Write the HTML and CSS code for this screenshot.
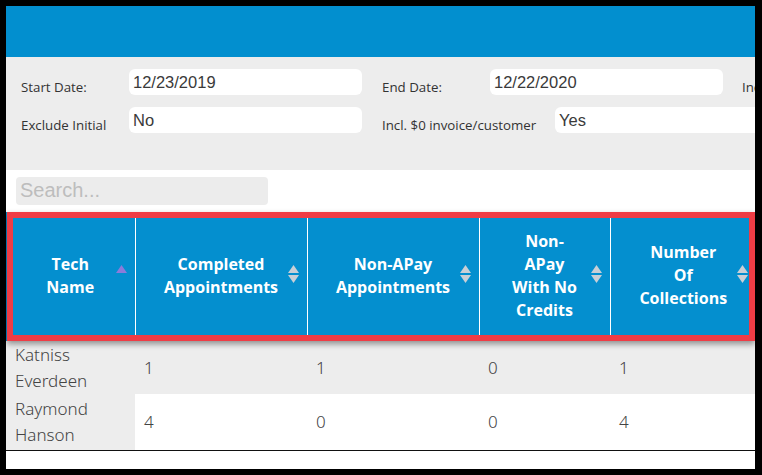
FILE: index.html
```html
<!DOCTYPE html>
<html>
<head>
<meta charset="utf-8">
<link rel="stylesheet" href="styles.css">
</head>
<body>
<div class="frame">
  <div class="topbar"></div>
  <div class="filters">
    <div class="frow">
      <span class="flabel w108">Start Date:</span>
      <div class="finput w233">12/23/2019</div>
      <span class="flabel w108 ml20">End Date:</span>
      <div class="finput w233">12/22/2020</div>
      <span class="flabel ml19">Incl. Credit</span>
    </div>
    <div class="frow">
      <span class="flabel w108">Exclude Initial</span>
      <div class="finput w233">No</div>
      <span class="flabel w173 ml20">Incl. $0 invoice/customer</span>
      <div class="finput w233">Yes</div>
    </div>
  </div>
  <div class="searchbar">
    <div class="search">Search...</div>
  </div>
  <div class="tablewrap">
    <table class="grid">
      <colgroup>
        <col class="c1"><col class="c2"><col class="c3"><col class="c4"><col class="c5">
      </colgroup>
      <thead>
        <tr>
          <th><span class="hl">Tech<br>Name</span>
            <svg class="sort" width="11" height="18" viewBox="0 0 11 18"><polygon class="asc-on" points="0,8 5.5,0 11,8"/></svg></th>
          <th><span class="hl">Completed<br>Appointments</span>
            <svg class="sort" width="11" height="18" viewBox="0 0 11 18"><polygon class="off" points="0,8 5.5,0 11,8"/><polygon class="off" points="0,10 5.5,18 11,10"/></svg></th>
          <th><span class="hl">Non-APay<br>Appointments</span>
            <svg class="sort" width="11" height="18" viewBox="0 0 11 18"><polygon class="off" points="0,8 5.5,0 11,8"/><polygon class="off" points="0,10 5.5,18 11,10"/></svg></th>
          <th><span class="hl">Non-<br>APay<br>With No<br>Credits</span>
            <svg class="sort" width="11" height="18" viewBox="0 0 11 18"><polygon class="off" points="0,8 5.5,0 11,8"/><polygon class="off" points="0,10 5.5,18 11,10"/></svg></th>
          <th><span class="hl">Number<br>Of<br>Collections</span>
            <svg class="sort" width="11" height="18" viewBox="0 0 11 18"><polygon class="off" points="0,8 5.5,0 11,8"/><polygon class="off" points="0,10 5.5,18 11,10"/></svg></th>
        </tr>
      </thead>
      <tbody>
        <tr class="odd">
          <td class="sorted">Katniss<br>Everdeen</td><td>1</td><td>1</td><td>0</td><td>1</td>
        </tr>
        <tr class="even">
          <td class="sorted">Raymond<br>Hanson</td><td>4</td><td>0</td><td>0</td><td>4</td>
        </tr>
      </tbody>
    </table>
    <div class="highlight"></div>
  </div>
</div>
</body>
</html>
```
FILE: styles.css
```css
html, body {
  margin: 0;
  padding: 0;
  background: #000;
}
.frame {
  margin: 6px 0 0 6px;
  width: 749px;
  height: 463px;
  background: #fff;
  overflow: hidden;
}
.topbar {
  height: 51px;
  background: #028fcf;
}
.filters {
  box-sizing: border-box;
  height: 113px;
  background: #ededed;
  padding: 12px 0 0 15px;
  display: flex;
  flex-direction: column;
  gap: 12px;
  white-space: nowrap;
}
.frow {
  display: flex;
  align-items: flex-end;
  height: 26px;
}
.flabel {
  font-family: "Open Sans", "Noto Sans", sans-serif;
  font-size: 13.3px;
  line-height: 18px;
  color: #333;
  flex: none;
  position: relative;
  top: 1px;
}
.w108 { width: 108px; }
.w173 { width: 173px; }
.ml20 { margin-left: 20px; }
.ml19 { margin-left: 19px; }
.finput {
  flex: none;
  height: 26px;
  box-sizing: border-box;
  background: #fff;
  border-radius: 6px;
  padding: 1px 4px 0 4px;
  font-family: "Liberation Sans", Arial, sans-serif;
  font-size: 16.5px;
  line-height: 25px;
  color: #3a3a3a;
}
.w233 { width: 233px; }
.searchbar {
  height: 42px;
  box-sizing: border-box;
  padding: 7px 0 0 10px;
}
.search {
  width: 252px;
  height: 28px;
  box-sizing: border-box;
  background: #ececec;
  border-radius: 4px;
  padding: 0 4px;
  font-family: "Liberation Sans", Arial, sans-serif;
  font-size: 20px;
  line-height: 27px;
  color: #bdbdbd;
}
.tablewrap {
  position: relative;
}
.grid {
  border-collapse: collapse;
  table-layout: fixed;
  width: 750px;
}
.c1 { width: 129px; }
.c2 { width: 172px; }
.c3 { width: 172px; }
.c4 { width: 131px; }
.c5 { width: 146px; }
.grid th {
  position: relative;
  height: 127px;
  padding: 0 0 2px 0;
  background: #048fcf;
  border-right: 1px solid #fff;
  font-family: "Open Sans", sans-serif;
  font-weight: 700;
  font-size: 16px;
  line-height: 23px;
  color: #fff;
  text-align: center;
  vertical-align: middle;
}
.grid th:last-child {
  border-right: none;
}
.sort {
  position: absolute;
  right: 8px;
  top: 53px;
}
.sort .off { fill: #c9cfd6; }
.sort .asc-on { fill: #8c7bd9; }
.grid td {
  padding: 0 9px;
  font-family: "Noto Sans", "Open Sans", sans-serif;
  font-weight: 300;
  font-size: 17px;
  line-height: 26px;
  color: #444;
  vertical-align: middle;
}
.grid tr.odd td { height: 53px; background: #ededed; }
.grid tr.even td { height: 56px; background: #fff; }
.grid tr.even td.sorted { background: #ededed; }
.grid tbody tr:last-child td {
  border-bottom: 1px solid #111;
}
.highlight {
  position: absolute;
  left: 1px;
  top: 0;
  width: 748px;
  height: 129px;
  box-sizing: border-box;
  border: 6px solid #ef3c45;
  box-shadow: 0 3px 6px rgba(0, 0, 0, 0.4);
  pointer-events: none;
}
```
